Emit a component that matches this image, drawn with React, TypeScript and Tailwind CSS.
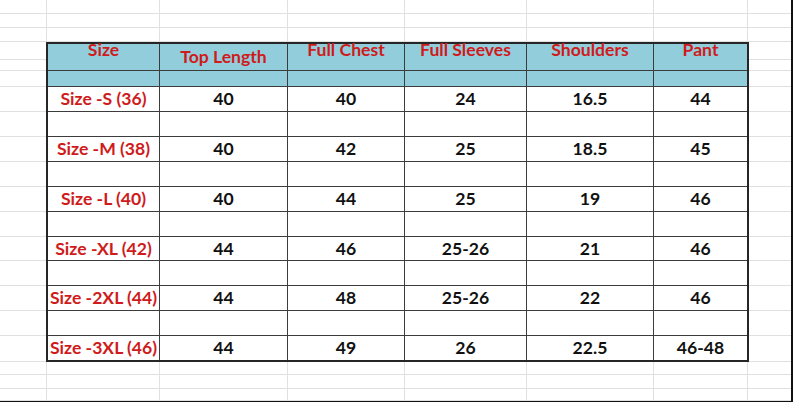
const GRID = "border-[#e0e0e0]";

const topWidths = [47, 113, 128, 117, 122, 127, 94];
const colWidths = ["w-[112px]", "w-[128px]", "w-[117px]", "w-[122px]", "w-[127px]", "w-[93px]"];
const stripHeights = ["h-[18px]", "h-[11px]", "h-[16px]", "h-[25px]", "h-[25px]", "h-[25px]", "h-[25px]", "h-[25px]", "h-[25px]", "h-[24px]", "h-[25px]", "h-[25px]", "h-[25px]", "h-[26px]"];
const bodyHeights = ["h-[25px]", "h-[25px]", "h-[25px]", "h-[25px]", "h-[25px]", "h-[25px]", "h-[24px]", "h-[25px]", "h-[25px]", "h-[25px]", "h-[24px]"];

const headers = [
  { label: "Size", pad: "pt-[1px]" },
  { label: "Top Length", pad: "pt-[8px]" },
  { label: "Full Chest", pad: "pt-[1px]" },
  { label: "Full Sleeves", pad: "pt-[1px]" },
  { label: "Shoulders", pad: "pt-[1px]" },
  { label: "Pant", pad: "pt-[1px]" },
];

const sizes = [
  { name: "Size -S (36)", values: ["40", "40", "24", "16.5", "44"] },
  { name: "Size -M (38)", values: ["40", "42", "25", "18.5", "45"] },
  { name: "Size -L (40)", values: ["40", "44", "25", "19", "46"] },
  { name: "Size -XL (42)", values: ["44", "46", "25-26", "21", "46"] },
  { name: "Size -2XL (44)", values: ["44", "48", "25-26", "22", "46"] },
  { name: "Size -3XL (46)", values: ["44", "49", "26", "22.5", "46-48"] },
];

function GridBand({ heights }: { heights: string[] }) {
  return (
    <div className="flex flex-col">
      {heights.map((h, r) => (
        <div key={r} className={`flex ${h}`}>
          {topWidths.map((w, i) => (
            <div
              key={i}
              className={`h-full border-r border-b ${GRID}`}
              style={{ width: w }}
            />
          ))}
          <div className={`h-full flex-1 border-b ${GRID}`} />
        </div>
      ))}
    </div>
  );
}

function Strip({ width }: { width: string }) {
  return (
    <div className={`flex flex-col ${width}`}>
      {stripHeights.map((h, i) => (
        <div key={i} className={`${h} border-b ${GRID}`} />
      ))}
    </div>
  );
}

function SizeTable() {
  const rows: (typeof sizes[number] | null)[] = [];
  sizes.forEach((s, i) => {
    rows.push(s);
    if (i < sizes.length - 1) rows.push(null);
  });

  return (
    <div className="flex flex-col border-2 border-[#262626] font-['Lato',sans-serif] font-bold text-[17.6px] leading-[18px]">
      <div className="flex h-[27px] bg-[#92cddc]">
        {headers.map((h, i) => (
          <div
            key={i}
            className={`${colWidths[i]} flex justify-center whitespace-nowrap leading-[10px] border-b border-[#3c3c3c] text-[#cf1b1b] ${h.pad} ${
              i < 5 ? "border-r" : ""
            }`}
          >
            {h.label}
          </div>
        ))}
      </div>
      <div className="flex h-[16px] bg-[#92cddc]">
        {colWidths.map((w, i) => (
          <div
            key={i}
            className={`${w} border-b border-[#3c3c3c] ${i < 5 ? "border-r" : ""}`}
          />
        ))}
      </div>
      {rows.map((row, r) => (
        <div key={r} className={`flex ${bodyHeights[r]} bg-white`}>
          {colWidths.map((w, i) => (
            <div
              key={i}
              className={`${w} flex items-center justify-center whitespace-nowrap border-[#3c3c3c] ${
                i < 5 ? "border-r" : ""
              } ${r < rows.length - 1 ? "border-b" : ""} ${
                i === 0 ? "text-[#cf1b1b]" : "text-[#111]"
              }`}
            >
              {row ? (i === 0 ? row.name : row.values[i - 1]) : null}
            </div>
          ))}
        </div>
      ))}
    </div>
  );
}

export default function App() {
  return (
    <div className="w-[794px] h-[403px] bg-white overflow-hidden">
      <div className="w-[793px] h-[402px] border-r-2 border-b-2 border-[#111] flex flex-col">
        <GridBand heights={["h-[14px]", "h-[14px]", "h-[14px]"]} />
        <div className="flex">
          <Strip width="w-[46px]" />
          <SizeTable />
          <Strip width="flex-1" />
        </div>
        <GridBand heights={["h-[13px]", "h-[14px]", "h-[12px]"]} />
      </div>
    </div>
  );
}
